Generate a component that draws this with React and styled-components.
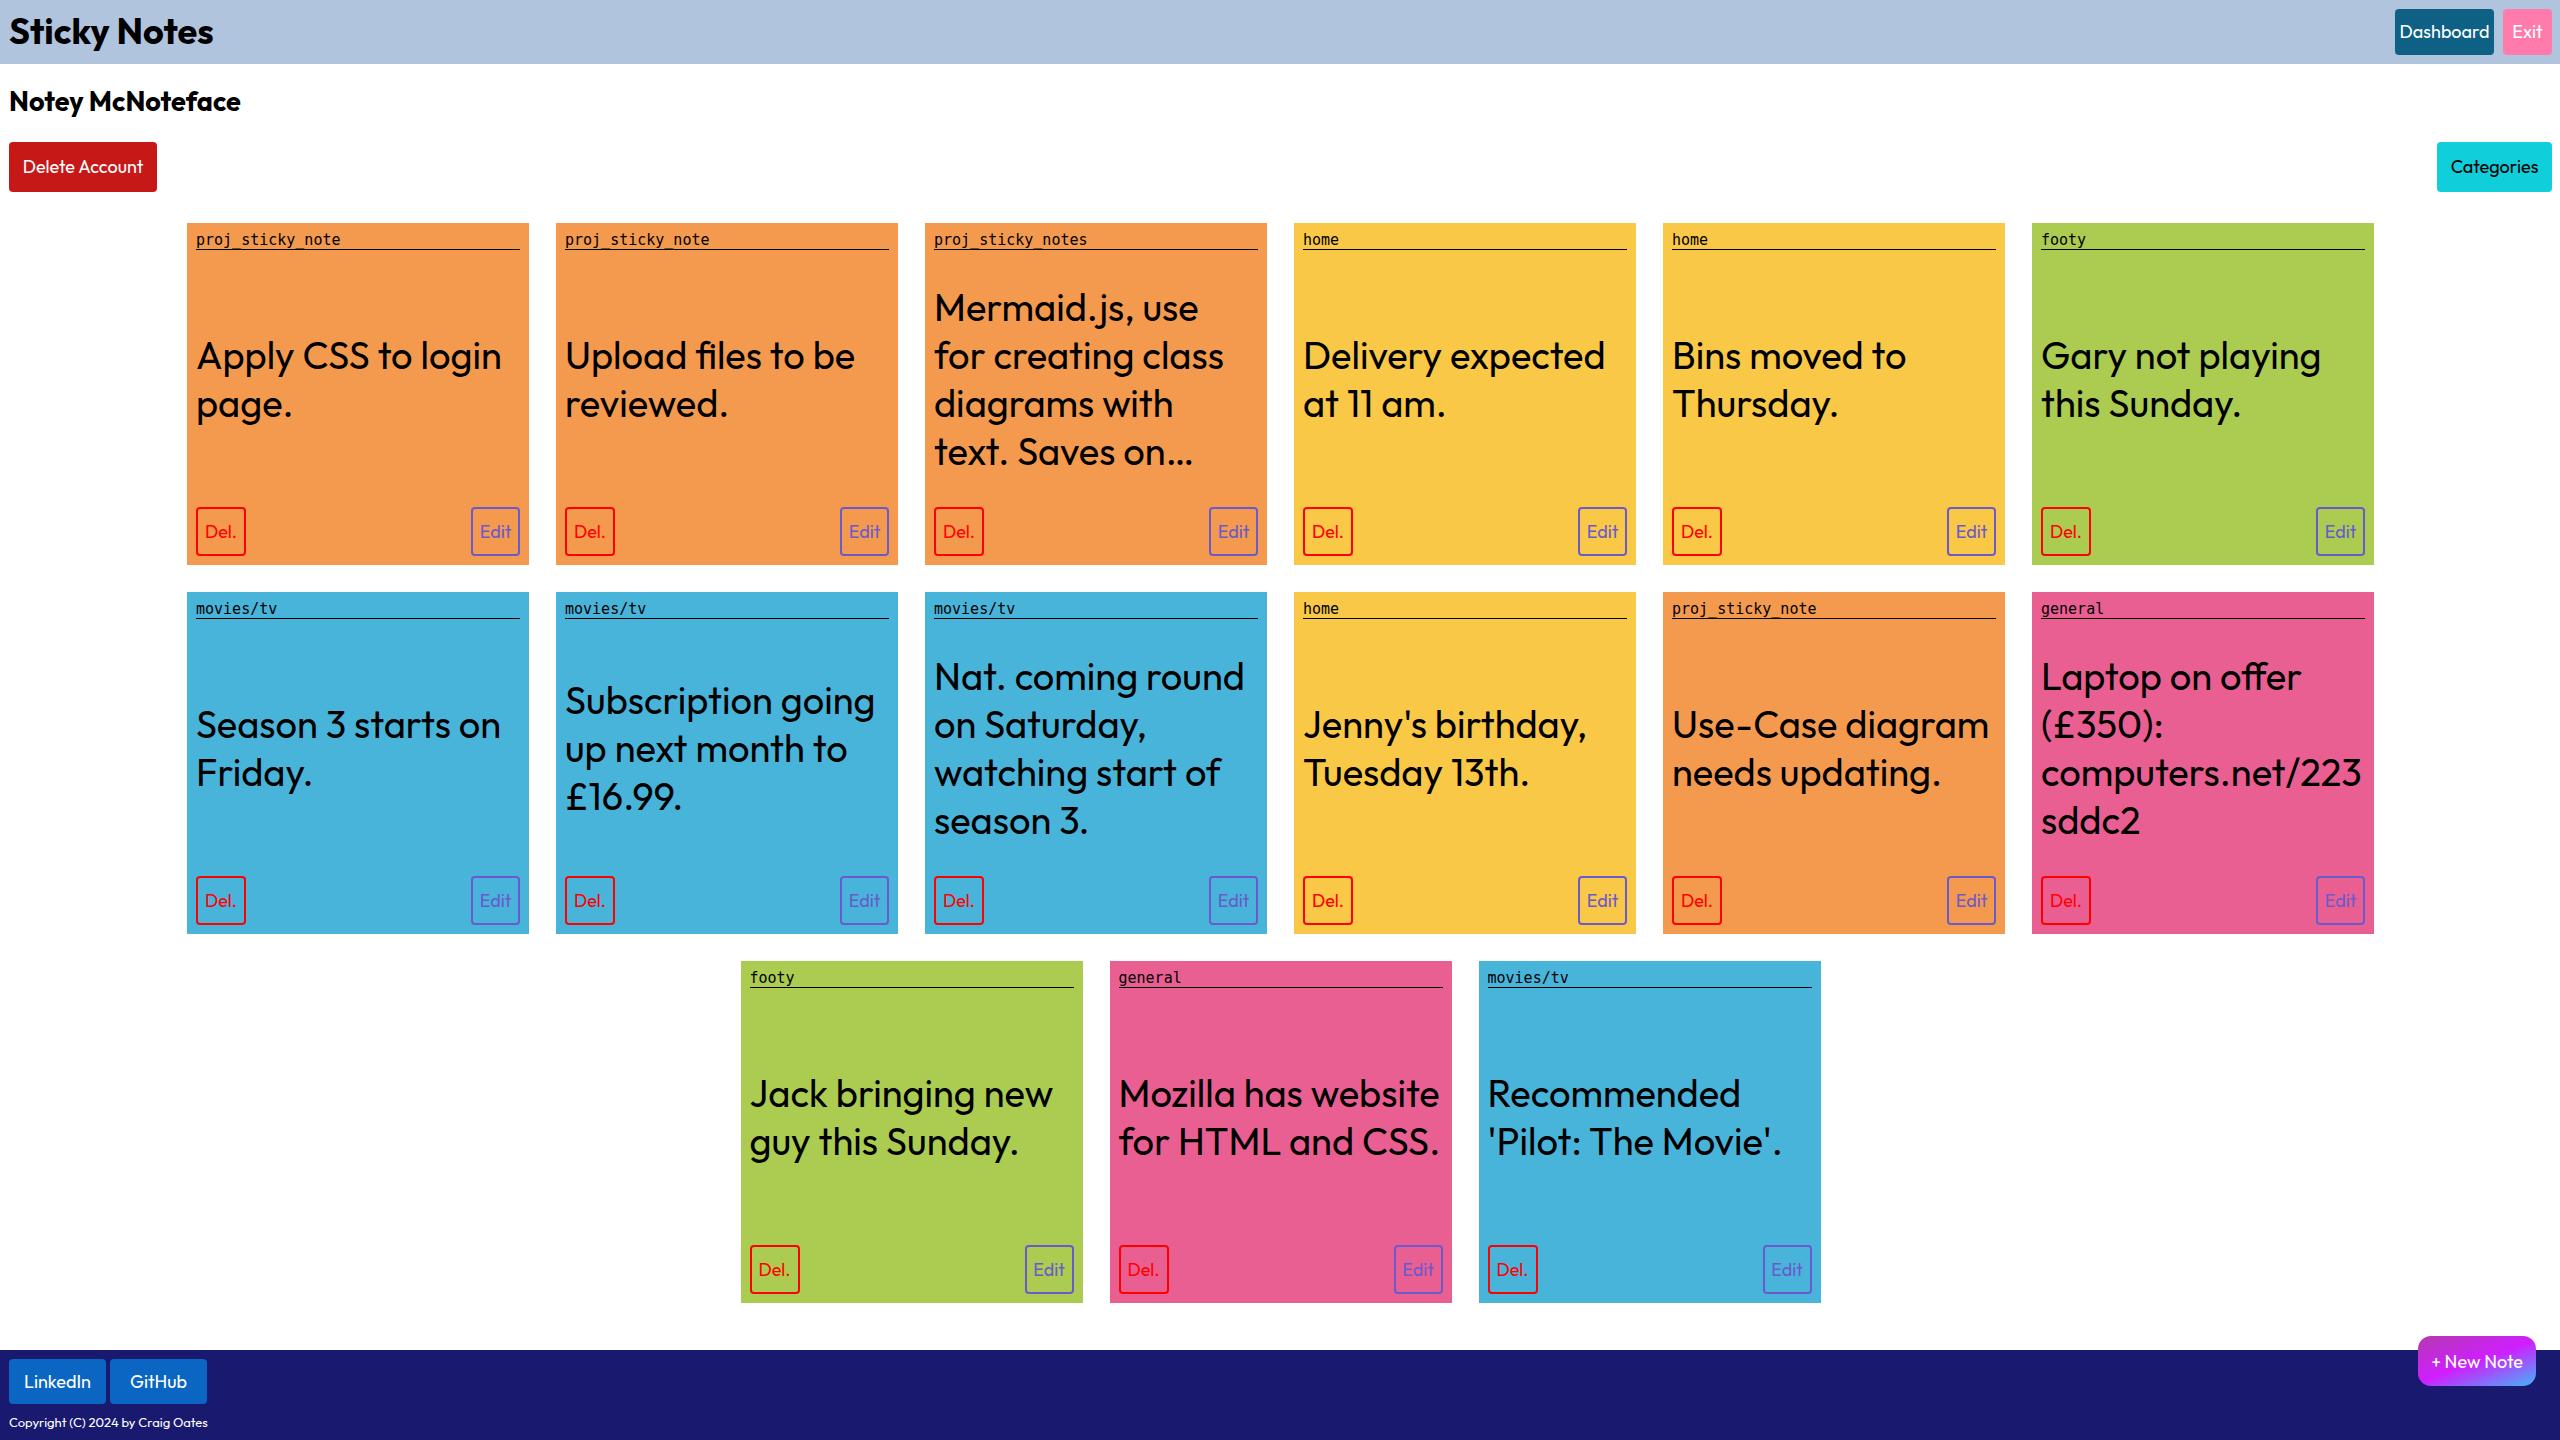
import React from "react";
import styled, { createGlobalStyle } from "styled-components";

const GlobalStyle = createGlobalStyle`
  *, *::before, *::after { box-sizing: border-box; }
  body {
    margin: 0;
    background: #fff;
    color: #000;
    font-family: Outfit, Lato, "Open Sans", sans-serif;
    font-size: 18px;
    line-height: 23px;
  }
  button { font: inherit; cursor: pointer; }
`;

const Page = styled.div`
  display: flex;
  flex-direction: column;
  min-height: 100vh;
`;

const Header = styled.header`
  display: flex;
  align-items: flex-start;
  justify-content: space-between;
  padding: 9px 8px 9px 9px;
  background: #b0c4de;
`;

const Title = styled.h1`
  margin: 0;
  font-size: 36px;
  line-height: 44px;
  font-weight: 700;
`;

const Nav = styled.nav`
  display: flex;
  gap: 9px;
`;

const NavLink = styled.a`
  min-width: ${(p) => p.$width}px;
  padding: 11px 0 12px;
  border-radius: 4px;
  background: ${(p) => p.$bg};
  color: #fff;
  text-align: center;
  text-decoration: none;
`;

const Main = styled.main`
  flex: 1;
  padding: 20px 8px 47px 9px;
`;

const UserName = styled.h2`
  margin: 0 0 24px;
  font-size: 27px;
  line-height: 34px;
  font-weight: 700;
`;

const Toolbar = styled.div`
  display: flex;
  justify-content: space-between;
  margin-bottom: 31px;
`;

const ActionButton = styled.button`
  min-width: ${(p) => p.$width}px;
  padding: 13px 0 14px;
  border: 0;
  border-radius: 4px;
  background: ${(p) => p.$bg};
  color: ${(p) => p.$fg};
`;

const Board = styled.section`
  display: flex;
  flex-wrap: wrap;
  justify-content: center;
  gap: 27px;
  max-width: 2187px;
  margin: 0 auto;
`;

const Note = styled.article`
  display: flex;
  flex-direction: column;
  width: 342px;
  height: 342px;
  padding: 9px;
  background: ${(p) => p.$bg};
`;

const Category = styled.div`
  border-bottom: 1px solid #000;
  font-family: "DejaVu Sans Mono", monospace;
  font-size: 15px;
  line-height: 17px;
`;

const NoteBody = styled.div`
  flex: 1;
  display: flex;
  align-items: center;
`;

const NoteText = styled.p`
  width: 100%;
  margin: 0;
  font-size: 38px;
  line-height: 48px;
  white-space: pre-line;
  overflow-wrap: anywhere;
`;

const NoteActions = styled.div`
  display: flex;
  justify-content: space-between;
`;

const OutlineButton = styled.button`
  min-width: ${(p) => p.$width}px;
  height: 49px;
  padding: 0;
  border: 2px solid ${(p) => p.$color};
  border-radius: 4px;
  background: transparent;
  color: ${(p) => p.$color};
`;

const Footer = styled.footer`
  padding: 9px;
  background: #191970;
  color: #fff;
`;

const FooterLinks = styled.div`
  display: flex;
  gap: 4px;
  margin-bottom: 9px;
`;

const FooterLink = styled.a`
  display: flex;
  align-items: center;
  justify-content: center;
  width: 97px;
  height: 45px;
  border-radius: 4px;
  background: #0a66c2;
  color: #fff;
  text-decoration: none;
`;

const Copyright = styled.p`
  margin: 0;
  font-size: 13px;
  line-height: 18px;
`;

const NewNote = styled.button`
  position: fixed;
  right: 24px;
  bottom: 54px;
  width: 118px;
  height: 50px;
  padding: 0;
  border: 0;
  border-radius: 13px;
  background: linear-gradient(160deg, #b33aae 0%, #d01eff 50%, #43b4f7 100%);
  color: #fff;
`;

const colours = {
  orange: "#f49a4e",
  yellow: "#f9c846",
  green: "#abcc51",
  blue: "#49b4da",
  pink: "#ea5f92",
};

const notes = [
  ["proj_sticky_note", "orange", "Apply CSS to login page."],
  ["proj_sticky_note", "orange", "Upload files to be reviewed."],
  ["proj_sticky_notes", "orange", "Mermaid.js, use\nfor creating class diagrams with\ntext. Saves on…"],
  ["home", "yellow", "Delivery expected\nat 11 am."],
  ["home", "yellow", "Bins moved to Thursday."],
  ["footy", "green", "Gary not playing\nthis Sunday."],
  ["movies/tv", "blue", "Season 3 starts on Friday."],
  ["movies/tv", "blue", "Subscription going\nup next month to £16.99."],
  ["movies/tv", "blue", "Nat. coming round\non Saturday,\nwatching start of\nseason 3."],
  ["home", "yellow", "Jenny's birthday,\nTuesday 13th."],
  ["proj_sticky_note", "orange", "Use-Case diagram\nneeds updating."],
  ["general", "pink", "Laptop on offer\n(£350):\ncomputers.net/223\nsddc2"],
  ["footy", "green", "Jack bringing new\nguy this Sunday."],
  ["general", "pink", "Mozilla has website\nfor HTML and CSS."],
  ["movies/tv", "blue", "Recommended\n'Pilot: The Movie'."],
];

export default function App() {
  return (
    <Page>
      <GlobalStyle />
      <Header>
        <Title>Sticky Notes</Title>
        <Nav>
          <NavLink href="#dashboard" $width={99} $bg="#0e6185">Dashboard</NavLink>
          <NavLink href="#exit" $width={49} $bg="#ff7bac">Exit</NavLink>
        </Nav>
      </Header>
      <Main>
        <UserName>Notey McNoteface</UserName>
        <Toolbar>
          <ActionButton type="button" $width={148} $bg="#c71818" $fg="#fff">Delete Account</ActionButton>
          <ActionButton type="button" $width={115} $bg="#10ceda" $fg="#000">Categories</ActionButton>
        </Toolbar>
        <Board>
          {notes.map(([category, colour, text]) => (
            <Note key={text} $bg={colours[colour]}>
              <Category>{category}</Category>
              <NoteBody>
                <NoteText>{text}</NoteText>
              </NoteBody>
              <NoteActions>
                <OutlineButton type="button" $width={50} $color="#ff0000">Del.</OutlineButton>
                <OutlineButton type="button" $width={49} $color="#6a5acd">Edit</OutlineButton>
              </NoteActions>
            </Note>
          ))}
        </Board>
      </Main>
      <Footer>
        <FooterLinks>
          <FooterLink href="#linkedin">LinkedIn</FooterLink>
          <FooterLink href="#github">GitHub</FooterLink>
        </FooterLinks>
        <Copyright>Copyright (C) 2024 by Craig Oates</Copyright>
      </Footer>
      <NewNote type="button">+ New Note</NewNote>
    </Page>
  );
}
